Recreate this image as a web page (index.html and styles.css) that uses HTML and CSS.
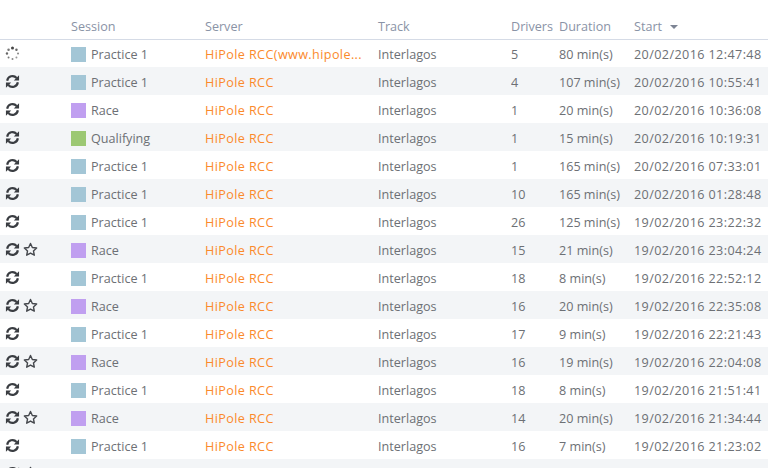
FILE: index.html
```html
<!DOCTYPE html>
<html lang="en">
<head>
<meta charset="utf-8">
<title>Sessions</title>
<link rel="stylesheet" href="styles.css">
</head>
<body>
<svg class="defs" width="0" height="0" aria-hidden="true">
  <symbol id="sync" viewBox="0 0 16 16">
    <path d="M2.3 7.2A5.8 5.8 0 0 1 12.4 4.2" fill="none" stroke="currentColor" stroke-width="2.3"/>
    <path d="M15 1.4v5.6H9.4z" fill="currentColor"/>
    <path d="M13.7 8.8A5.8 5.8 0 0 1 3.6 11.8" fill="none" stroke="currentColor" stroke-width="2.3"/>
    <path d="M1 14.6V9h5.6z" fill="currentColor"/>
  </symbol>
  <symbol id="star" viewBox="0 0 16 16">
    <path d="M8 1.6l1.95 4.2 4.6.55-3.4 3.15.9 4.55L8 11.8l-4.05 2.25.9-4.55L1.45 6.35l4.6-.55z" fill="none" stroke="currentColor" stroke-width="1.5" stroke-linejoin="round"/>
  </symbol>
  <symbol id="spin" viewBox="0 0 16 16">
    <circle cx="8" cy="2.2" r="1.6" fill="#444"/>
    <circle cx="12.2" cy="3.9" r="1.3" fill="#666"/>
    <circle cx="13.9" cy="8" r="1.1" fill="#888"/>
    <circle cx="12.2" cy="12.2" r="1.05" fill="#999"/>
    <circle cx="8" cy="13.9" r="1.05" fill="#888"/>
    <circle cx="3.8" cy="12.2" r="1.05" fill="#777"/>
    <circle cx="2.1" cy="8" r="1.25" fill="#666"/>
    <circle cx="3.8" cy="3.9" r="1.35" fill="#777"/>
  </symbol>
</svg>
<table class="sessions">
  <colgroup>
    <col class="c-icons"><col class="c-session"><col class="c-server"><col class="c-track"><col class="c-drivers"><col class="c-duration"><col class="c-start">
  </colgroup>
  <thead>
    <tr><th></th><th>Session</th><th>Server</th><th>Track</th><th>Drivers</th><th>Duration</th><th>Start <span class="caret"></span></th></tr>
  </thead>
  <tbody>
    <tr><td class="icons"><svg class="ic spin"><use href="#spin"/></svg></td><td><span class="sq practice"></span>Practice 1</td><td class="srv">HiPole RCC(www.hipole...</td><td>Interlagos</td><td>5</td><td>80 min(s)</td><td class="when">20/02/2016 12:47:48</td></tr>
    <tr><td class="icons"><svg class="ic"><use href="#sync"/></svg></td><td><span class="sq practice"></span>Practice 1</td><td class="srv">HiPole RCC</td><td>Interlagos</td><td>4</td><td>107 min(s)</td><td class="when">20/02/2016 10:55:41</td></tr>
    <tr><td class="icons"><svg class="ic"><use href="#sync"/></svg></td><td><span class="sq race"></span>Race</td><td class="srv">HiPole RCC</td><td>Interlagos</td><td>1</td><td>20 min(s)</td><td class="when">20/02/2016 10:36:08</td></tr>
    <tr><td class="icons"><svg class="ic"><use href="#sync"/></svg></td><td><span class="sq quali"></span>Qualifying</td><td class="srv">HiPole RCC</td><td>Interlagos</td><td>1</td><td>15 min(s)</td><td class="when">20/02/2016 10:19:31</td></tr>
    <tr><td class="icons"><svg class="ic"><use href="#sync"/></svg></td><td><span class="sq practice"></span>Practice 1</td><td class="srv">HiPole RCC</td><td>Interlagos</td><td>1</td><td>165 min(s)</td><td class="when">20/02/2016 07:33:01</td></tr>
    <tr><td class="icons"><svg class="ic"><use href="#sync"/></svg></td><td><span class="sq practice"></span>Practice 1</td><td class="srv">HiPole RCC</td><td>Interlagos</td><td>10</td><td>165 min(s)</td><td class="when">20/02/2016 01:28:48</td></tr>
    <tr><td class="icons"><svg class="ic"><use href="#sync"/></svg></td><td><span class="sq practice"></span>Practice 1</td><td class="srv">HiPole RCC</td><td>Interlagos</td><td>26</td><td>125 min(s)</td><td class="when">19/02/2016 23:22:32</td></tr>
    <tr><td class="icons"><svg class="ic"><use href="#sync"/></svg><svg class="ic st"><use href="#star"/></svg></td><td><span class="sq race"></span>Race</td><td class="srv">HiPole RCC</td><td>Interlagos</td><td>15</td><td>21 min(s)</td><td class="when">19/02/2016 23:04:24</td></tr>
    <tr><td class="icons"><svg class="ic"><use href="#sync"/></svg></td><td><span class="sq practice"></span>Practice 1</td><td class="srv">HiPole RCC</td><td>Interlagos</td><td>18</td><td>8 min(s)</td><td class="when">19/02/2016 22:52:12</td></tr>
    <tr><td class="icons"><svg class="ic"><use href="#sync"/></svg><svg class="ic st"><use href="#star"/></svg></td><td><span class="sq race"></span>Race</td><td class="srv">HiPole RCC</td><td>Interlagos</td><td>16</td><td>20 min(s)</td><td class="when">19/02/2016 22:35:08</td></tr>
    <tr><td class="icons"><svg class="ic"><use href="#sync"/></svg></td><td><span class="sq practice"></span>Practice 1</td><td class="srv">HiPole RCC</td><td>Interlagos</td><td>17</td><td>9 min(s)</td><td class="when">19/02/2016 22:21:43</td></tr>
    <tr><td class="icons"><svg class="ic"><use href="#sync"/></svg><svg class="ic st"><use href="#star"/></svg></td><td><span class="sq race"></span>Race</td><td class="srv">HiPole RCC</td><td>Interlagos</td><td>16</td><td>19 min(s)</td><td class="when">19/02/2016 22:04:08</td></tr>
    <tr><td class="icons"><svg class="ic"><use href="#sync"/></svg></td><td><span class="sq practice"></span>Practice 1</td><td class="srv">HiPole RCC</td><td>Interlagos</td><td>18</td><td>8 min(s)</td><td class="when">19/02/2016 21:51:41</td></tr>
    <tr><td class="icons"><svg class="ic"><use href="#sync"/></svg><svg class="ic st"><use href="#star"/></svg></td><td><span class="sq race"></span>Race</td><td class="srv">HiPole RCC</td><td>Interlagos</td><td>14</td><td>20 min(s)</td><td class="when">19/02/2016 21:34:44</td></tr>
    <tr><td class="icons"><svg class="ic"><use href="#sync"/></svg></td><td><span class="sq practice"></span>Practice 1</td><td class="srv">HiPole RCC</td><td>Interlagos</td><td>16</td><td>7 min(s)</td><td class="when">19/02/2016 21:23:02</td></tr>
    <tr><td class="icons"><svg class="ic"><use href="#sync"/></svg><svg class="ic st"><use href="#star"/></svg></td><td></td><td></td><td></td><td></td><td></td><td></td></tr>
  </tbody>
</table>
</body>
</html>
```
FILE: styles.css
```css
html, body {
  margin: 0;
  height: 468px;
  overflow: hidden;
  background: #fff;
}
.defs { position: absolute; }
.sessions {
  width: 768px;
  table-layout: fixed;
  border-collapse: collapse;
  font-family: "Open Sans", "Noto Sans", sans-serif;
  font-size: 12.6px;
  color: #6d7075;
}
.c-icons { width: 71px; }
.c-session { width: 134px; }
.c-server { width: 173px; }
.c-track { width: 133px; }
.c-drivers { width: 48px; }
.c-duration { width: 75px; }
.c-start { width: 134px; }
th {
  height: 39px;
  padding: 15px 0 0;
  box-sizing: border-box;
  border-bottom: 1px solid #d5dbe6;
  font-weight: 400;
  text-align: left;
  color: #8a93a6;
  white-space: nowrap;
}
td {
  height: 28px;
  padding: 2px 0 0;
  box-sizing: border-box;
  white-space: nowrap;
  overflow: hidden;
}
tbody tr:nth-child(even) { background: #f3f5f7; }
.srv { color: #fb8a2b; letter-spacing: 0.4px; }
.when { letter-spacing: 0.4px; }
.icons { padding: 0 0 0 5px; line-height: 0; }
.ic {
  width: 15px;
  height: 15px;
  color: #3a3d42;
  vertical-align: middle;
}
.ic.st { margin-left: 3px; color: #45484d; }
.sq {
  display: inline-block;
  width: 15px;
  height: 15px;
  margin-right: 5px;
  vertical-align: -3px;
}
.practice { background: #a3c6d6; }
.race { background: #c09ff0; }
.quali { background: #9cc873; }
.caret {
  display: inline-block;
  margin-left: 5px;
  vertical-align: 2px;
  border-left: 4px solid transparent;
  border-right: 4px solid transparent;
  border-top: 4px solid #7d8494;
}
```
